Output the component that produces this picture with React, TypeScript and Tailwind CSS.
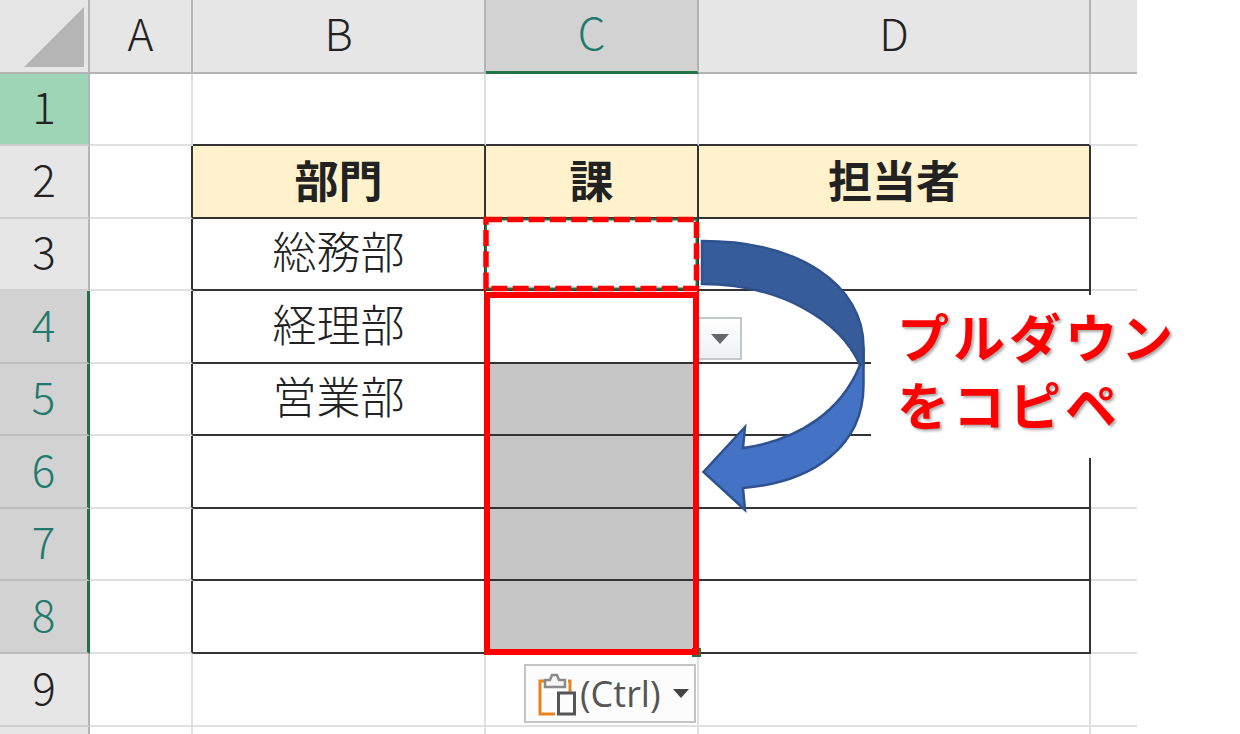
import React from 'react';

const columns = ['A', 'B', 'C', 'D', ''];

const rows = [
  { no: '1', cells: ['', '', ''] },
  { no: '2', cells: ['部門', '課', '担当者'] },
  { no: '3', cells: ['総務部', '', ''] },
  { no: '4', cells: ['経理部', '', ''] },
  { no: '5', cells: ['営業部', '', ''] },
  { no: '6', cells: ['', '', ''] },
  { no: '7', cells: ['', '', ''] },
  { no: '8', cells: ['', '', ''] },
  { no: '9', cells: ['', '', ''] },
  { no: '', cells: ['', '', ''] },
];

const RowHead: React.FC<{ no: string }> = ({ no }) => {
  const n = Number(no);
  const selected = n >= 4 && n <= 8;
  let tone = 'bg-[#e6e6e6] text-[#222] border-r-2 border-r-[#b4b4b4] border-b-2 border-b-[#cfcfcf]';
  if (no === '1') tone = 'bg-[#9fd5b7] text-[#222] border-r-2 border-r-[#b4b4b4] border-b-2 border-b-[#cfcfcf]';
  if (selected) tone = 'bg-[#d2d2d2] text-[#217a6b] border-r-[3px] border-r-[#217346] border-b-2 border-b-[#bdbdbd]';
  return <div className={`flex items-center justify-center text-[44px] font-light pb-[8px] ${tone}`}>{no}</div>;
};

const Cell: React.FC<{ row: number; col: number; text: string }> = ({ row, col, text }) => {
  const inTable = row >= 2 && row <= 8;
  const head = row === 2;
  const tableCol = col >= 1 && col <= 3;
  let right = 'border-r-2 border-r-[#e0e0e0]';
  let bottom = 'border-b-[#e0e0e0]';
  if (inTable && col <= 3) right = 'border-r-2 border-r-[#333]';
  if (col === 4) right = 'border-r-0';
  if (tableCol && row >= 1 && row <= 8) bottom = 'border-b-[#333]';
  const fill = head && tableCol ? 'bg-[#fff2cc]' : col === 2 && row >= 5 && row <= 8 ? 'bg-[#c6c6c6]' : 'bg-white';
  const weight = head ? 'font-bold pb-[6px]' : 'font-light pb-[8px]';
  return (
    <div className={`flex items-center justify-center border-b-2 text-[44px] text-[#222] ${right} ${bottom} ${fill} ${weight}`}>
      {text}
    </div>
  );
};

const Arrow = () => (
  <svg className="absolute left-[695px] top-[235px]" width="175" height="280" viewBox="695 235 175 280">
    <path
      d="M863.5 347 L863.5 385 C863.5 445 815 482 743 488 L745 510 L703.5 472 L745 427 L743 448 C800 440 842 410 860 365 Z"
      fill="#4472c4"
      stroke="#2f528f"
      strokeWidth="2.5"
    />
    <path
      d="M702 241 C800 241 863.5 285 863.5 347 L863.5 365 L860 365 C840 320 780 284 702 284 Z"
      fill="#365c9a"
      stroke="#2f528f"
      strokeWidth="2.5"
    />
  </svg>
);

const PasteIcon = () => (
  <svg width="38" height="44" viewBox="0 0 38 44">
    <path d="M17 9 H2 V42 H17" fill="none" stroke="#e5831e" strokeWidth="3" />
    <path d="M30 9 H32 V20" fill="none" stroke="#e5831e" strokeWidth="3" />
    <path d="M7 15 V8 H12 L14 3 H19 L21 8 H27 V15 Z" fill="#f5f5f5" stroke="#8a8a8a" strokeWidth="2.5" />
    <rect x="20.5" y="21" width="16" height="21" fill="#fcfcfc" stroke="#555" strokeWidth="3" />
  </svg>
);

export default function App() {
  return (
    <div className="relative w-[1240px] h-[734px] overflow-hidden bg-white [font-family:'Noto_Sans_CJK_JP',sans-serif]">
      <div className="grid w-[1137px] grid-cols-[90px_103px_293px_213px_392px_46px] grid-rows-[74px_72px_73px_72px_73px_72px_73px_72px_73px_73px_20px]">
        {/* Corner */}
        <div className="flex items-end justify-end bg-[#e6e6e6] border-r-2 border-b-2 border-[#b4b4b4] pr-[4px] pb-[5px]">
          <svg width="60" height="60" viewBox="0 0 60 60">
            <path d="M60 0 V60 H0 Z" fill="#b5b5b5" />
          </svg>
        </div>
        {/* Column headers */}
        {columns.map((c) => (
          <div
            key={c || 'E'}
            className={
              c === 'C'
                ? 'flex items-center justify-center bg-[#d2d2d2] text-[#217a6b] text-[44px] font-light pb-[9px] border-r-2 border-r-[#b4b4b4] border-b-[3px] border-b-[#217346]'
                : c === ''
                  ? 'bg-[#e6e6e6] border-b-2 border-[#b4b4b4]'
                  : 'flex items-center justify-center bg-[#e6e6e6] text-[#222] text-[44px] font-light pb-[9px] border-r-2 border-b-2 border-[#b4b4b4]'
            }
          >
            {c}
          </div>
        ))}
        {/* Sheet rows */}
        {rows.map((r, i) => (
          <React.Fragment key={i}>
            <RowHead no={r.no} />
            <Cell row={i + 1} col={0} text="" />
            {r.cells.map((t, j) => (
              <Cell key={j} row={i + 1} col={j + 1} text={t} />
            ))}
            <Cell row={i + 1} col={4} text="" />
          </React.Fragment>
        ))}
      </div>

      {/* Dropdown button of cell C4 */}
      <div className="absolute left-[697px] top-[317px] w-[45px] h-[43px] flex items-center justify-center border-2 border-[#c3c6cb] bg-gradient-to-b from-white to-[#eef0f4]">
        <svg width="18" height="10" viewBox="0 0 18 10">
          <path d="M0 0 H18 L9 10 Z" fill="#666" />
        </svg>
      </div>

      {/* Copy source, dashed */}
      <svg className="absolute left-[483px] top-[216px]" width="218" height="76" viewBox="0 0 218 76">
        <rect x="3" y="3.5" width="210.5" height="69" fill="none" stroke="#217346" strokeWidth="2" />
        <rect x="3" y="3.5" width="210.5" height="69" fill="none" stroke="#ff0000" strokeWidth="5.5" strokeDasharray="16 5.3" />
      </svg>

      {/* Paste range */}
      <div className="absolute left-[484px] top-[292px] w-[215px] h-[363px] border-[6px] border-[#ff0000]" />
      <div className="absolute left-[692px] top-[648px] w-[9px] h-[9px] bg-[#217346]" />
      <div className="absolute left-[692px] top-[648px] w-[7px] h-[7px] bg-[#ff0000]" />

      {/* Paste options button */}
      <div className="absolute left-[524px] top-[664px] w-[172px] h-[59px] flex items-center gap-[4px] pl-[12px] border-2 border-[#c4c4c4] bg-[#fcfcfc]">
        <PasteIcon />
        <span className="text-[36px] text-[#555] [font-family:'Open_Sans',sans-serif]">(Ctrl)</span>
        <svg className="ml-[8px]" width="16" height="9" viewBox="0 0 16 9">
          <path d="M0 0 H16 L8 9 Z" fill="#444" />
        </svg>
      </div>

      {/* Callout */}
      <div className="absolute left-[871px] top-[295px] w-[340px] h-[163px] bg-white pl-[26px] pt-[7px] text-[52px] leading-[68px] tracking-[4px] font-bold text-[#ff0000] [text-shadow:2px_2px_3px_rgba(0,0,0,0.35)]">
        <div>プルダウン</div>
        <div>をコピペ</div>
      </div>

      <Arrow />
    </div>
  );
}
